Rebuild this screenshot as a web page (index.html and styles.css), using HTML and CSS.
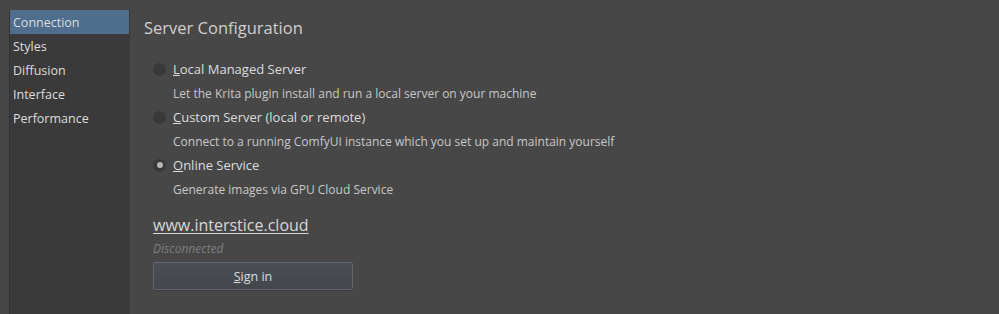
FILE: index.html
```html
<!DOCTYPE html>
<html lang="en">
<head>
  <meta charset="UTF-8" />
  <title>Settings</title>
  <link rel="stylesheet" href="styles.css">
</head>
<body>
  <div class="window">
    <ul class="sidebar">
      <li class="active">Connection</li>
      <li>Styles</li>
      <li>Diffusion</li>
      <li>Interface</li>
      <li>Performance</li>
    </ul>

    <main class="page">
      <h1>Server Configuration</h1>

      <div class="options">
        <label class="option">
          <span class="radio"></span>
          <span><u>L</u>ocal Managed Server</span>
        </label>
        <p class="desc">Let the Krita plugin install and run a local server on your machine</p>

        <label class="option">
          <span class="radio"></span>
          <span><u>C</u>ustom Server (local or remote)</span>
        </label>
        <p class="desc">Connect to a running ComfyUI instance which you set up and maintain yourself</p>

        <label class="option">
          <span class="radio checked"></span>
          <span><u>O</u>nline Service</span>
        </label>
        <p class="desc">Generate images via GPU Cloud Service</p>
      </div>

      <div class="cloud">
        <a href="#" class="cloud-link">www.interstice.cloud</a>
        <p class="status">Disconnected</p>
        <button class="sign-in"><u>S</u>ign in</button>
      </div>
    </main>
  </div>
</body>
</html>
```

FILE: styles.css
```css
body {
  margin: 0;
  background: #474747;
  font-family: "Open Sans", "Noto Sans", sans-serif;
  color: #dcdcdc;
  height: 314px;
  overflow: hidden;
}

.window {
  display: flex;
  padding: 10px 0 0 9px;
  height: 304px;
}

.sidebar {
  list-style: none;
  margin: 0;
  padding: 0 1px 0 0;
  width: 119px;
  background: #3a3a3a;
  border-left: 1px solid #333;
  font-size: 12.5px;
}

.sidebar li {
  box-sizing: border-box;
  height: 24px;
  line-height: 22px;
  padding: 2px 0 0 3px;
  color: #dedede;
}

.sidebar li.active {
  background: #4f6d8d;
}

.page {
  padding-left: 14px;
}

h1 {
  margin: 7px 0 0;
  font-weight: normal;
  font-size: 16.5px;
  color: #cfcfcf;
  line-height: 22px;
}

.options {
  margin-top: 18px;
  padding-left: 9px;
}

.option {
  display: flex;
  align-items: center;
  gap: 7px;
  height: 24px;
  font-size: 13px;
  color: #dcdcdc;
}

.radio {
  width: 13px;
  height: 13px;
  border-radius: 50%;
  background: #393939;
  display: flex;
  align-items: center;
  justify-content: center;
}

.radio.checked::after {
  content: "";
  width: 6px;
  height: 6px;
  border-radius: 50%;
  background: #b8b8b8;
}

.desc {
  margin: 0;
  height: 24px;
  line-height: 26px;
  padding-left: 20px;
  font-size: 12px;
  color: #c8c8c8;
}

.cloud {
  padding-left: 9px;
  margin-top: 13px;
}

.cloud-link {
  display: block;
  font-size: 16px;
  line-height: 22px;
  color: #d8d8d8;
  text-decoration: underline;
  text-underline-offset: 2px;
  width: max-content;
}

.status {
  margin: 4px 0 0;
  font-size: 12px;
  font-style: italic;
  color: #7e7e7e;
  line-height: 18px;
}

.sign-in {
  margin-top: 4px;
  width: 200px;
  height: 28px;
  font-family: inherit;
  font-size: 12.5px;
  color: #dcdcdc;
  background: linear-gradient(#4a4f55, #43474c);
  border: 1px solid #5f666e;
  border-radius: 2px;
  box-shadow: 0 1px 0 #3c3c3c;
}
```
